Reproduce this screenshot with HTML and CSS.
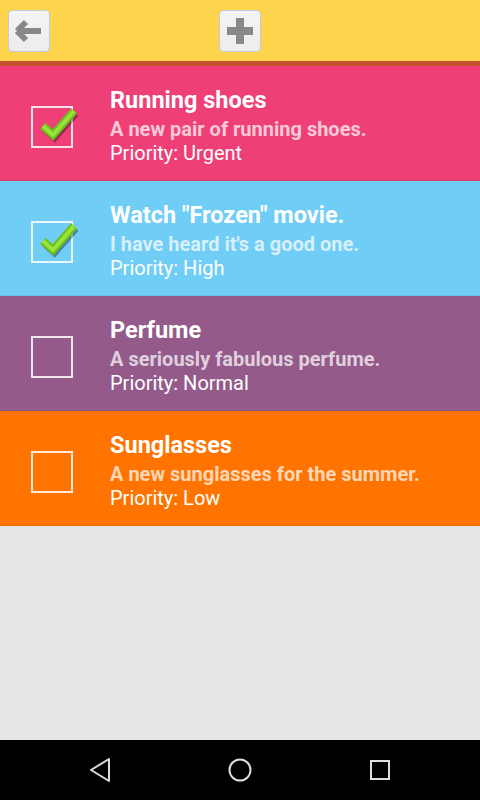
FILE: index.html
```html
<!DOCTYPE html>
<html lang="en">
<head>
<meta charset="UTF-8">
<meta name="viewport" content="width=device-width, initial-scale=1.0">
<title>Wish List</title>
<link rel="stylesheet" href="styles.css">
</head>
<body>
<div id="app">
    <header class="toolbar">
        <button class="tool-btn back-btn" title="Back">
            <svg width="28" height="24" viewBox="0 0 28 24"><path d="M3 12 L12 3 M3 12 L12 21 M3 12 H27" stroke="#888" stroke-width="6" fill="none" stroke-linejoin="miter"/></svg>
        </button>
        <button class="tool-btn add-btn" title="Add">
            <svg width="26" height="26" viewBox="0 0 26 26"><path d="M13 0 V26 M0 13 H26" stroke="#888" stroke-width="8" fill="none"/></svg>
        </button>
    </header>
    <div id="wishes"></div>
    <div class="spacer"></div>
    <nav class="navbar">
        <svg width="24" height="26" viewBox="0 0 24 26"><path d="M21 2 V24 L3 13 Z" stroke="#ddd" stroke-width="2" fill="none" stroke-linejoin="round"/></svg>
        <svg width="24" height="24" viewBox="0 0 24 24"><circle cx="12" cy="12" r="10.5" stroke="#ddd" stroke-width="2" fill="none"/></svg>
        <svg width="24" height="24" viewBox="0 0 24 24"><rect x="3" y="3" width="18" height="18" stroke="#ddd" stroke-width="2" fill="none"/></svg>
    </nav>
</div>
<script>
// wish list items
let wishes = [
    { title: 'Running shoes', desc: 'A new pair of running shoes.', priority: 'Urgent', color: 'pink', done: true },
    { title: 'Watch "Frozen" movie.', desc: "I have heard it's a good one.", priority: 'High', color: 'blue', done: true },
    { title: 'Perfume', desc: 'A seriously fabulous perfume.', priority: 'Normal', color: 'purple', done: false },
    { title: 'Sunglasses', desc: 'A new sunglasses for the summer.', priority: 'Low', color: 'orange', done: false }
];

const checkSvg = `<svg class="tick" width="50" height="38" viewBox="0 0 50 38">
    <path d="M12 21 L22 30 L43 6" stroke="rgba(0,0,0,0.35)" stroke-width="8" fill="none" transform="translate(1.5,2)"/>
    <path d="M12 21 L22 30 L43 6" stroke="#6cc11a" stroke-width="8" fill="none"/>
    <path d="M12 21 L22 30 L43 6" stroke="#98e43a" stroke-width="4" fill="none"/>
</svg>`;

function toggleWish(index) {
    wishes[index].done = !wishes[index].done;
    renderWishes();
}

function renderWishes() {
    const list = document.getElementById('wishes');
    list.innerHTML = '';
    wishes.forEach((wish, index) => {
        const row = document.createElement('div');
        row.className = 'wish ' + wish.color;
        row.innerHTML = `
            <div class="check" onclick="toggleWish(${index})">${wish.done ? checkSvg : ''}</div>
            <div class="info">
                <div class="title">${wish.title}</div>
                <div class="desc">${wish.desc}</div>
                <div class="priority">Priority: ${wish.priority}</div>
            </div>
        `;
        list.appendChild(row);
    });
}

renderWishes();
</script>
</body>
</html>
```
FILE: styles.css
```css
body {
    margin: 0;
    padding: 0;
    font-family: 'Roboto', 'Liberation Sans', sans-serif;
    background-color: #e5e5e5;
}
#app {
    display: flex;
    flex-direction: column;
    height: 800px;
}
.toolbar {
    display: flex;
    align-items: center;
    height: 61px;
    padding-left: 8px;
    background-color: #fed44c;
    border-bottom: 5px solid #c4512b;
}
.tool-btn {
    width: 42px;
    height: 42px;
    padding: 0;
    border: 1px solid #c3cad8;
    border-radius: 4px;
    background: linear-gradient(#f4f4f4, #ececec);
    display: flex;
    align-items: center;
    justify-content: center;
}
.back-btn svg {
    margin-right: 2px;
}
.add-btn {
    margin-left: 169px;
}
.wish {
    display: flex;
    align-items: flex-start;
    height: 114px;
    border-bottom: 1px solid rgba(0, 0, 0, 0.06);
    color: white;
}
.wish.pink { background-color: #ee4077; }
.wish.blue { background-color: #70cdf6; }
.wish.purple { background-color: #935a8a; }
.wish.orange { background-color: #ff7400; }
.check {
    position: relative;
    width: 38px;
    height: 38px;
    margin: 40px 37px 0 31px;
    border: 2px solid rgba(255, 255, 255, 0.85);
    flex-shrink: 0;
    cursor: pointer;
}
.tick {
    position: absolute;
    left: -2px;
    top: -3px;
}
.info {
    padding-top: 17px;
}
.title {
    font-size: 23.5px;
    font-weight: bold;
    line-height: 35px;
}
.desc {
    font-size: 20px;
    font-weight: bold;
    line-height: 23px;
    color: rgba(255, 255, 255, 0.72);
}
.priority {
    font-size: 20px;
    line-height: 24px;
}
.spacer {
    flex-grow: 1;
}
.navbar {
    height: 60px;
    background-color: black;
    display: flex;
    align-items: center;
    justify-content: space-between;
    padding: 0 88px;
}
```
